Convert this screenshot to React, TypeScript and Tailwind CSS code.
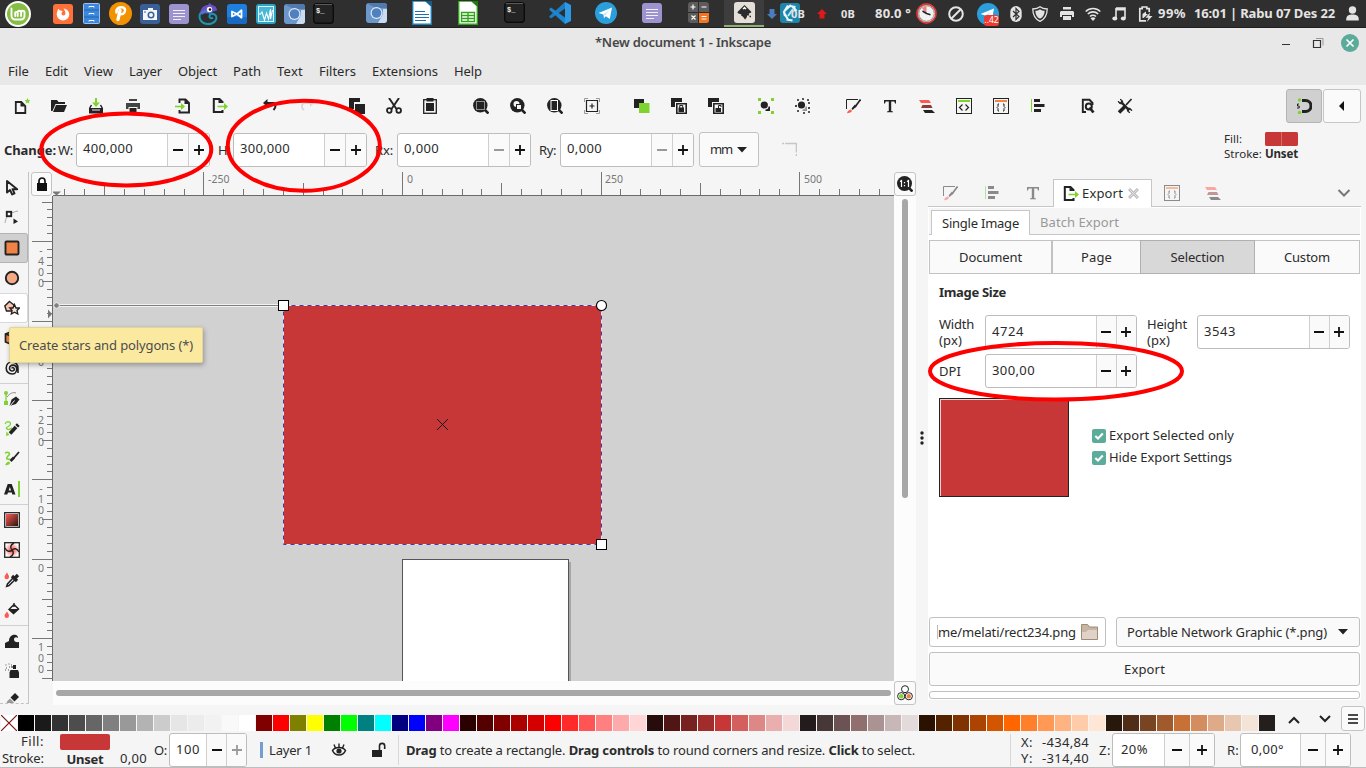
import { useLayoutEffect, useRef, useState } from "react";
import type { ReactNode } from "react";

const K = "#222222";
const G = "#7ed32f";
const R = "#ff5a52";

/* Text set to an exact advance width by tracking. */
function T({ w, c = "", children }: { w: number; c?: string; children: ReactNode }) {
  const ref = useRef<HTMLSpanElement>(null);
  const [ls, setLs] = useState(0);
  useLayoutEffect(() => {
    const el = ref.current;
    if (!el) return;
    el.style.letterSpacing = "0px";
    const n = (el.textContent || "").length || 1;
    const next = (w - el.getBoundingClientRect().width) / n;
    setLs(next);
    el.style.letterSpacing = next + "px";
  }, [w]);
  return (
    <span ref={ref} className={"inline-block shrink-0 whitespace-pre " + c} style={{ letterSpacing: ls }}>
      {children}
    </span>
  );
}

function S({ w = 16, h, vb, c = "", children }: { w?: number; h?: number; vb?: string; c?: string; children: ReactNode }) {
  const hh = h ?? w;
  return (
    <svg width={w} height={hh} viewBox={vb ?? `0 0 ${w} ${hh}`} fill="none" className={"shrink-0 " + c}>
      {children}
    </svg>
  );
}

/* ---------- desktop panel icons ---------- */
const Mint = () => (
  <S w={26} h={26}>
    <circle cx="13" cy="13" r="13" fill="#fff" />
    <circle cx="13" cy="13" r="11" fill="#86be43" />
    <path d="M6.500 7.500v7.500a3.500 3.500 0 0 0 3.500 3.500h6a3.500 3.500 0 0 0 3.500-3.500v-3.500a1.700 1.700 0 0 0-3.400 0V15M16.100 11.500a1.700 1.700 0 0 0-3.400 0V15M12.700 11.500a1.500 1.500 0 0 0-2.500 0V15" stroke="#fff" strokeWidth="1.900" strokeLinecap="round" />
  </S>
);
const Firefox = () => (
  <S w={20}>
    <rect width="20" height="20" rx="3" fill="#ff7139" />
    <path d="M10 16.500A6.300 6.300 0 0 1 3.700 10.500C3.700 8 4.700 7 5.200 4.800L7 6.500c1-.2 2 0 2.500.7L8.500 9c0 1.500.5 2.500 2 2.500S13 10 12.200 8c-.3-1.500-1-2.500-1.700-3.500 3.500.5 5.800 3 5.800 6a6.300 6.300 0 0 1-6.300 6z" fill="#fff" />
  </S>
);
const Files = () => (
  <S w={17} h={21}>
    <rect x=".5" y=".5" width="16" height="20" rx="1" fill="#3a87dd" stroke="#9cc3ee" />
    <path d="M1 7h15M1 14h15" stroke="#2564ae" />
    <path d="M6 4.500v-1h5v1M6 11.500v-1h5v1M6 18.500v-1h5v1" stroke="#fff" />
  </S>
);
const PIcon = () => (
  <S w={23}>
    <circle cx="11.500" cy="11.500" r="11.500" fill="#f39200" />
    <path d="M9 17.500 11 8.500" stroke="#fff" strokeWidth="3.400" strokeLinecap="round" />
    <path d="M7.500 10.500C7 6.500 9.500 5.300 12.500 5.300c3.500 0 4.300 2.700 3 5-1 1.700-3 2.200-5 1.900" stroke="#fff" strokeWidth="2.600" strokeLinecap="round" />
  </S>
);
const Camera = () => (
  <S w={20}>
    <rect width="20" height="20" rx="3" fill="#3a5f98" />
    <path d="M3 6h5V4h5v2h4v10H3z" fill="#f4f6fa" />
    <circle cx="11" cy="11" r="3.500" fill="#3a5f98" />
    <circle cx="11" cy="11" r="2" fill="#f4f6fa" />
    <path d="M4 8h2" stroke="#3a5f98" />
  </S>
);
const Notes = () => (
  <S w={20}>
    <rect width="20" height="20" rx="3" fill="#9d94cf" />
    <path d="M4 6.500h12M4 9.500h12M4 12.500h12M4 15.500h8" stroke="#f1effb" />
  </S>
);
const Chameleon = () => (
  <S w={20} h={22}>
    <path d="M2 10C3 4 7 2 10 2l1.500-2L14 2c3 .5 5 2.500 5 5.500-2 .5-4 .5-5 2.500l-4 .5z" fill="#6850c4" />
    <path d="M2.500 10c-2.500 5 .5 11 7.500 11 6 0 9.500-4 8-8-1.500-3-6-3-6.500 0-.3 2 2 3 3.500 1.500" stroke="#1a96b4" strokeWidth="2" />
    <path d="M3 11c2-3 7-3.500 9.500-1.500" stroke="#4d74cf" strokeWidth="3" />
    <circle cx="11.500" cy="6.500" r="2.700" fill="#fff" />
    <circle cx="12" cy="6.500" r="1.300" fill="#111" />
  </S>
);
const VsBlue = () => (
  <S w={20}>
    <rect width="20" height="20" rx="3" fill="#1d7fe0" />
    <path d="M0 13h20v4a3 3 0 0 1-3 3H3a3 3 0 0 1-3-3z" fill="#1769c4" />
    <path d="M5 7.500v5l5-2.500 4.500-3.700v7.400L10 10z" stroke="#fff" strokeWidth="1.800" strokeLinejoin="round" />
  </S>
);
const Monitor = () => (
  <S w={20}>
    <rect width="20" height="20" rx="3" fill="#2ea3c9" />
    <rect x="2.500" y="2.500" width="15" height="15" stroke="#d9f3fb" fill="#48b8d9" />
    <path d="M3 10h1.500l1.500-2 2.500 8L10.500 9l2 6L14.500 5v10l2-9" stroke="#fff" strokeWidth="1.100" />
  </S>
);
const Chromium = () => (
  <S w={21} h={20}>
    <rect width="21" height="20" rx="3" fill="#6c97cb" />
    <path d="M3 0h15a3 3 0 0 1 3 3v2H10L2 1z" fill="#5179ae" />
    <path d="M21 6v11a3 3 0 0 1-3 3h-6l5-9V6z" fill="#c9dcf1" />
    <circle cx="10.500" cy="10" r="6" fill="#dfeaf8" />
    <circle cx="10.500" cy="10" r="4.800" fill="#4f80bf" />
  </S>
);
const Term = () => (
  <S w={21}>
    <rect x=".7" y=".7" width="19.600" height="19.600" rx="3" fill="#242424" stroke="#0c0c0c" strokeWidth="1.400" />
    <path d="M2 1.500h17" stroke="#5a5a5a" />
    <text x="3" y="9.500" fontSize="7" fontFamily="Liberation Mono, monospace" fontWeight="700" fill="#eee">$_</text>
  </S>
);
const Doc = ({ calc = false }: { calc?: boolean }) => (
  <S w={20} h={24}>
    <path d="M.7 0v23.300h18.600V5L14 0z" fill="#fff" stroke={calc ? "#2fa318" : "#1c7db8"} strokeWidth="1.400" />
    <path d="M13 0h7v6z" fill={calc ? "#1f7d0f" : "#175c8a"} />
    {calc ? (
      <path d="M3.500 11.500h13v9h-13zM3.500 14.500h13M3.500 17.500h13M10 11.500v9" stroke="#2fa318" strokeWidth="1.300" />
    ) : (
      <path d="M3 10.500h10M3 13.500h14M3 16.500h14M3 19.500h11" stroke="#1c6fa8" strokeWidth="1.100" />
    )}
  </S>
);
const VsCode = () => (
  <S w={22} h={22}>
    <path d="M16 0v22l6-3V3z" fill="#2d9ae6" />
    <path d="M16 0 0 14.500l2 2L16 6.500z" fill="#1f7cc0" />
    <path d="M0 7.500l2-2 14 10V22z" fill="#1d86d1" />
  </S>
);
const Telegram = () => (
  <S w={22}>
    <circle cx="11" cy="11" r="11" fill="#2b9fdc" />
    <path d="M3.500 11 17 5.500 14.800 17l-4-2.800-1.800 2-.6-3.700z" fill="#fff" />
    <path d="M8.500 12.500 14 8.500l-4.200 5" fill="#b9dcf0" />
  </S>
);
const Calc = () => (
  <S w={21}>
    <rect width="21" height="21" rx="3" fill="#5c5c5c" />
    <path d="M11 11h10v7a3 3 0 0 1-3 3h-7z" fill="#f5751d" />
    <path d="M10.500 0v21M0 10.500h21" stroke="#2c2c2c" />
    <path d="M2.500 5h5M5 2.500v5M13.500 5h5M3.500 13.500l4 4M7.500 13.500l-4 4M13.500 14.500h5M13.500 17h5" stroke="#fff" strokeWidth="1.200" />
  </S>
);
const Ink = () => (
  <S w={21}>
    <rect width="21" height="21" rx="3" fill="#e4e0d8" />
    <path d="M10.500 3 17 9.500c1 1-.5 1.500-2 2-1 .8 1 1.300 0 2H13c0 1.500 0 2-2 4-1-1.500-2-3-4-4 1-1 0-1.500-2.500-2C3.500 11 3 10.500 4 9.500z" fill="#2b2b2b" />
    <path d="M10.500 4.500 12.500 6.700l-1 .7-1-.7-1 .8-1-.8z" fill="#fff" />
    <path d="M15.500 14.500h1.500" stroke="#2b2b2b" strokeWidth="1.500" />
  </S>
);
const Shutter = () => (
  <S w={20}>
    <rect width="20" height="20" rx="3" fill="#1f86ab" />
    <path d="M11 2 5.500 7M8 2.500 4 9l1 4M4.500 10.500l3.500 6M6.500 16.500l6 1M15.500 4 10 3M12 3l4.500 5" stroke="#e8f6fc" strokeWidth="2.200" />
    <path d="M13 6 8 13" stroke="#bfe4f2" strokeWidth="2" />
  </S>
);
const Arrow = ({ up = false }: { up?: boolean }) => (
  <S w={10}>
    {up ? <path d="M5 0 10 5H7.500v4.500h-5V5H0z" fill="#e01818" /> : <path d="M5 10 0 5h2.500V0h5v5H10z" fill="#4a7dbd" />}
  </S>
);
const Clock = () => (
  <S w={21}>
    <circle cx="10.500" cy="10.500" r="9.500" fill="#f2f2f2" stroke="#d83a3a" strokeWidth="1.800" />
    <circle cx="10.500" cy="10.500" r="7.800" stroke="#888" strokeWidth="1" />
    <path d="M10.500 10.500V3L6 5z" fill="#f08080" />
    <path d="M10.500 10.500 6.500 8M10.500 10.500l4 1.200" stroke="#222" strokeWidth="1.500" />
  </S>
);
const W = "#e4e4e4";
const NoEntry = () => (
  <S>
    <circle cx="8" cy="8" r="6.800" stroke={W} strokeWidth="2" />
    <path d="M12.500 3.500l-9 9" stroke={W} strokeWidth="2" />
  </S>
);
const Blue = () => (
  <S w={12} h={16}>
    <rect x=".3" width="11.400" height="16" rx="5.700" fill={W} />
    <path d="M3 5l6 5.500L6 13.500v-11L9 5.500 3 11" stroke="#2f2f2f" strokeWidth="1.200" />
  </S>
);
const Shield = () => (
  <S>
    <path d="M8 .8C6 2.500 3.500 3 .8 3 .8 9 3 13 8 15.300 13 13 15.200 9 15.200 3 12.500 3 10 2.500 8 .8z" stroke={W} strokeWidth="1.300" />
    <path d="M8 3.200C6.500 4.300 5 4.700 3.300 4.800c.2 4 1.700 6.500 4.700 8 3-1.500 4.500-4 4.700-8C11 4.700 9.500 4.300 8 3.200z" fill={W} />
  </S>
);
const Print = ({ f = W, o = 1 }: { f?: string; o?: number }) => (
  <S w={14} h={13}>
    <path d="M3 0h8v2.500H3z" fill={f} />
    <path d="M1 4h12l1 1v5h-2V8H2v2H0V5z" fill={f} fillOpacity={o} />
    <path d="M3 9h8v4H3z" fill={f} />
  </S>
);
const Wifi = () => (
  <S w={16} h={14}>
    <path d="M.7 4.500a10.500 10.500 0 0 1 14.600 0M2.800 7a7.500 7.500 0 0 1 10.400 0M5 9.500a4.300 4.300 0 0 1 6 0" stroke={W} strokeWidth="1.600" />
    <path d="M5.500 11.200 8 14l2.500-2.800a4 4 0 0 0-5 0z" fill={W} />
  </S>
);
const Music = () => (
  <S w={14}>
    <path d="M4 1h9v10M4 1v10" stroke={W} strokeWidth="1.600" />
    <path d="M4 1h9v2.500H4z" fill={W} />
    <ellipse cx="2.800" cy="11.500" rx="2.500" ry="2" fill={W} />
    <ellipse cx="11.300" cy="11.500" rx="2.500" ry="2" fill={W} />
  </S>
);
const Batt = () => (
  <S w={15} h={16}>
    <path d="M8 14.800H1.800V2.700h2.400V1h4.600v1.700h2.400V6" stroke={W} strokeWidth="1.700" />
    <path d="M4.500 12V8L8 5.500V8h2L5.500 12z" fill={W} />
    <path d="M12 6.500 7.500 11.800h3L8.800 16l5.700-6h-3.200z" fill={W} />
  </S>
);
const User = () => (
  <S w={13} h={15}>
    <circle cx="6.500" cy="4" r="3.700" fill={W} />
    <path d="M.3 14.500c-.5-5 2.500-6 6.200-6s6.700 1 6.200 6z" fill={W} />
  </S>
);

/* ---------- Inkscape command icons (16px grid) ---------- */
const DocOut = () => (
  <S>
    <path d="M10.500 5V4L7.500 1H1.800v13H10.500v-2" stroke={K} strokeWidth="2" />
    <path d="M6.500 1v4h4z" fill={K} />
    <path d="M5.500 8.500h7" stroke={G} strokeWidth="1.500" />
    <path d="M12 5l4 3.500-4 3.500z" fill={G} />
  </S>
);
const Brush = () => (
  <S>
    <path d="M1.500 11V1.500H13" stroke={K} />
    <path d="M15.500 1.500 10 9" stroke={K} strokeWidth="1.700" />
    <path d="M10 6.500 11.500 8.500 7.500 12l-1-1.500z" fill={K} />
    <path d="M6 11.500 7 13c-1.500 2-3 2-5 2.300.5-2.200 2-3.500 4-3.800z" fill={R} />
  </S>
);
const TextT = () => (
  <S>
    <path d="M2 2h12v3.500h-1L12.300 3.500H9.200v9.500l1.800.6v.6H5v-.6l1.800-.6V3.500H3.700L3 5.500H2z" fill={K} />
  </S>
);
const Layers = () => (
  <S>
    <path d="M0 2h10l2 3H2z" fill={R} />
    <path d="M3.500 7H12l1.500 3H2z" fill="#8e3a38" />
    <path d="M4 12h9l3 3H6z" fill={K} />
  </S>
);
const Sheet = ({ col, txt }: { col: string; txt: string }) => (
  <S>
    <rect x=".5" y=".5" width="15" height="15" stroke={K} />
    <path d="M2 3h12" stroke={col} strokeWidth="2" />
    {txt === "<>" ? (
      <path d="M6.500 6.500 3.500 9.500l3 3M9.500 6.500l3 3-3 3" stroke={K} strokeWidth="1.200" />
    ) : (
      <path d="M6 6H5v2.500L4 9.500l1 1V13h1M10 6h1v2.500l1 1-1 1V13h-1" stroke={K} />
    )}
  </S>
);
const Align = () => (
  <S>
    <path d="M1.500 1v13" stroke={G} />
    <path d="M4 2.500h6M4 7.500h10.500M4 12.500h7" stroke={K} strokeWidth="3" />
  </S>
);
const Mag = ({ children }: { children: ReactNode }) => (
  <S>
    <circle cx="7.300" cy="7.300" r="7.200" fill={K} />
    <path d="M12 12l3.500 3.500" stroke={K} strokeWidth="2.600" />
    {children}
  </S>
);
const cmd: ReactNode[][] = [
  [
    <S>
      <path d="M1.800 4h5.500l4 4v7H1.800z" stroke={K} strokeWidth="1.800" />
      <path d="M6.500 4v4.500H11z" fill={K} />
      <path d="M13.500 0l.9 1.900 2 .2-1.500 1.400.4 2-1.800-1-1.800 1 .4-2-1.500-1.400 2-.2z" fill={G} />
    </S>,
    <S>
      <path d="M0 2h6l1.500 2H14v2H4.500L1.500 13H0z" fill={K} />
      <path d="M5 7h11l-3 7H2z" fill={K} />
    </S>,
    <S>
      <path d="M7 0h2v4.500h3L8 9 4 4.500h3z" fill={G} />
      <path d="M3.500 7 1.500 10.500M12.500 7l2 3.500" stroke={K} strokeWidth="1.500" />
      <path d="M1 10h14v5.500H1z" fill={K} />
      <path d="M4 12h8" stroke="#eee" />
    </S>,
    <S>
      <path d="M4 1h8v2H4zM1 5h14v6h-2.500V9h-9v2H1z" fill="#444" />
      <path d="M4.500 10h7v4h-7z" fill={K} />
    </S>,
  ],
  [
    <S>
      <path d="M4.500 5V1.500h6L14 5v9.500H4.500V12" stroke={K} strokeWidth="1.900" />
      <path d="M9.500 1v5H14z" fill={K} />
      <path d="M0 8.500h7" stroke={G} strokeWidth="1.600" />
      <path d="M6 5l4 3.500L6 12z" fill={G} />
    </S>,
    <DocOut />,
  ],
  [
    <S>
      <path d="M3 5h8c3 0 3.500 4 .5 7" stroke={K} strokeWidth="2" />
      <path d="M5.500 1v8L1 5z" fill={K} />
    </S>,
    <S>
      <path d="M13 5H6C2 5 2 10 5 12" stroke="#d8d8d8" strokeWidth="1.800" />
      <path d="M11 1v8l4-4z" fill="#d8d8d8" />
    </S>,
  ],
  [
    <S>
      <path d="M0 0h11v4H5v7H0z" fill={K} />
      <path d="M6 6h10v10H6z" fill={K} />
    </S>,
    <S>
      <path d="M3 0 10.500 11M13 0 5.500 11" stroke={K} strokeWidth="1.900" />
      <circle cx="3.300" cy="12.500" r="2.300" stroke={K} strokeWidth="1.800" />
      <circle cx="12.700" cy="12.500" r="2.300" stroke={K} strokeWidth="1.800" />
    </S>,
    <S c="-ml-px">
      <rect x="1.700" y="1.700" width="12.600" height="13.600" stroke={K} strokeWidth="1.300" />
      <path d="M4.500 0h7v3.500h-7zM4 5h8v8H4z" fill={K} />
    </S>,
  ],
  [
    <Mag>
      <rect x="3.500" y="3.500" width="8" height="8" stroke="#fff" strokeDasharray="1 1" />
    </Mag>,
    <Mag>
      <circle cx="6.500" cy="6" r="3" fill="#f5f5f5" />
      <rect x="6.500" y="6.500" width="5" height="5" fill="#f5f5f5" stroke={K} />
    </Mag>,
    <Mag>
      <rect x="4" y="2.500" width="6.500" height="10" stroke="#fff" fill={K} />
    </Mag>,
    <S>
      <path d="M.5 4V.5H4M12 .5h3.500V4M15.500 12v3.500H12M4 15.500H.5V12" stroke="#999" />
      <path d="M2.500 2.500h11v11h-11zM8 5.500v5M5.500 8h5" stroke={K} strokeWidth="1.200" />
    </S>,
  ],
  [
    <S>
      <path d="M0 1h10v4H5v5H0z" fill={K} />
      <path d="M5 5h10.500v10H5z" fill={G} />
    </S>,
    <S>
      <path d="M0 0h11v4H4v5H0z" fill={K} />
      <path d="M5.800 5.800h9.400v9.400H5.800z" stroke={K} strokeWidth="1.600" />
      <path d="M7.500 9.500h5.500V14H7.500z" fill={K} />
      <path d="M8.700 10V7.500h3V10" stroke={K} />
    </S>,
    <S>
      <path d="M0 0h11v4H4v5H0z" fill={K} />
      <path d="M5.800 5.800h9.400v9.400H5.800z" stroke={K} strokeWidth="1.600" />
      <path d="M7.500 10h5.500v4H7.500z" fill={K} />
      <path d="M10.500 10V7.500h2.500V9" stroke={K} />
    </S>,
  ],
  [
    <S>
      <path d="M0 0h3v3H0zM13 0h3v3h-3zM0 13h3v3H0zM13 13h3v3h-3z" fill={G} />
      <circle cx="6.300" cy="7" r="3.600" fill={K} />
      <path d="M10.500 8.500H12V13H7.500v-1.500c2 0 3-1 3-3z" fill={K} />
    </S>,
    <S>
      <circle cx="6.500" cy="7" r="3.600" fill={K} />
      <path d="M10.500 8.500H12V13H7.500v-1.500c2 0 3-1 3-3z" fill="#999" />
      <path d="M2 2h2M7 1h2M12 2h2M1 7v2M13 5h2M2 13h2M8 15h2M13 14h2M14 9v2" stroke={K} strokeWidth="1.700" />
    </S>,
  ],
  [<Brush />, <TextT />, <Layers />, <Sheet col={G} txt="<>" />, <Sheet col="#f58442" txt="{}" />, <Align />],
  [
    <S>
      <path d="M6 14H2.800V1.800H9.500L12.500 5v2" stroke={K} strokeWidth="1.900" />
      <circle cx="8.800" cy="8.500" r="3" stroke={K} strokeWidth="2" />
      <path d="M9.500 9.500 13.500 14.500" stroke={K} strokeWidth="2.800" />
    </S>,
    <S>
      <path d="M14.500 1 9 7" stroke={K} strokeWidth="1.700" />
      <path d="M8.500 8 2 14.500" stroke={K} strokeWidth="3.600" />
      <path d="M5 5l6.500 6.500" stroke={K} strokeWidth="2.400" />
      <path d="M3 1.300 4.800 3 3.200 4.800 1.200 3.300A3 3 0 0 0 5.500 5.500 3 3 0 0 0 3 1.300zM13 14.700 11.200 13l1.600-1.800 2 1.500a3 3 0 0 0-4.300-2.200 3 3 0 0 0 2.500 4.200z" fill={K} stroke={K} />
    </S>,
  ],
];

/* ---------- toolbox icons ---------- */
const tools: ReactNode[][] = [
  [
    <S>
      <path d="M3 1v11.500L6 10l2.200 4.500 2.300-1L8.500 9.200h4.700z" stroke={K} strokeWidth="1.900" strokeLinejoin="round" />
    </S>,
    <S>
      <path d="M1 13C1.500 8 4 3 14 1" stroke="#aaa" />
      <rect x="2.800" y="1.800" width="4.400" height="4.400" fill="#fff" stroke={K} strokeWidth="1.900" />
      <path d="M9.500 8.500 14 11.500l-4.500 2.500z" fill={K} />
    </S>,
    <S>
      <rect x="1.500" y="1.500" width="13" height="13" rx="1" fill="#f08247" stroke={K} strokeWidth="1.900" />
    </S>,
    <S>
      <circle cx="8" cy="8" r="6.200" fill="#f5a985" stroke={K} strokeWidth="1.900" />
    </S>,
    <S>
      <path d="M5.500 1.500 10 5 8.500 11H2.500L.8 6z" fill="#fac5ab" stroke={K} strokeWidth="1.400" />
      <path d="M10.500 4.500 12 8h3.500l-2.500 2.500.8 3.500-3.300-1.800L7.300 14l.8-3.500L5.800 8H9z" fill="#fde2d5" stroke={K} strokeWidth="1.300" />
    </S>,
    <S>
      <path d="M1.500 4 8 1.500 14.500 4v8L8 14.500 1.500 12z" fill="#f08247" stroke={K} strokeWidth="1.700" />
      <path d="M1.500 4 8 6.500 14.500 4M8 6.500v8" stroke={K} strokeWidth="1.400" />
    </S>,
    <S>
      <path d="M8 8.500c0-1.500 2.500-1 2.300.8-.3 2.500-4.800 2.200-4.800-1C5.500 4 12.500 4 12.700 9c0 3-2 5-4.500 5C0 14 .500 2 8 2c4 0 6 3 6 7v4" stroke={K} strokeWidth="1.600" />
    </S>,
  ],
  [
    <S>
      <path d="M2 2v11" stroke={G} strokeWidth="1.300" />
      <circle cx="2" cy="2" r="2" fill={G} />
      <path d="M0 10h4v4H0z" fill={G} />
      <path d="M3 6C6 2 9 1 12 2" stroke="#888" />
      <path d="M5.500 15 7.500 8.500 12 5.500 15.500 8.500 12 13z" fill={K} />
      <path d="M6 15l4.500-5.500" stroke="#eee" />
    </S>,
    <S>
      <path d="M1 3C3-1 8 1 6 4S1 6 3 8s4-1 5-1" stroke={G} strokeWidth="1.300" />
      <path d="M2.500 10.500 5.500 14 2 15z" fill={G} />
      <path d="M6 12.500 12 6" stroke={K} strokeWidth="3.600" />
      <path d="M12.700 5.300l1.600-1.700" stroke={K} strokeWidth="3.800" />
    </S>,
    <S>
      <path d="M1 2c4-2 6 1 3 3-2 2-2 4 2 3" stroke={G} strokeWidth="1.600" />
      <path d="M15 1 9 8" stroke={K} strokeWidth="1.800" />
      <path d="M10 6.500 6.500 10" stroke={K} strokeWidth="2.600" />
      <path d="M5 10.500 6.200 12c-1 2-3 2.200-5 2.300.5-2 1.800-3.600 3.800-3.800z" fill={G} />
    </S>,
    <S>
      <path d="M3.700 3h4L11.500 13.500H8.300L7.800 11.500H4L3.300 13.500H0zM5.800 6 4.700 9.500h2.400z" fill={K} fillRule="evenodd" />
      <path d="M15 0v16" stroke={G} strokeWidth="2" />
    </S>,
  ],
  [
    <S>
      <defs>
        <linearGradient id="gr" x1="0" y1="0" x2="1" y2="1">
          <stop stopColor="#ff5a52" />
          <stop offset="1" stopColor="#2a1412" />
        </linearGradient>
      </defs>
      <rect x=".700" y=".700" width="14.600" height="14.600" fill="#fff" stroke={K} strokeWidth="1.300" />
      <rect x="2" y="2" width="12" height="12" fill="url(#gr)" />
    </S>,
    <S>
      <defs>
        <radialGradient id="gm">
          <stop stopColor="#ff3a32" />
          <stop offset="1" stopColor="#fff" />
        </radialGradient>
      </defs>
      <rect x=".700" y=".700" width="14.600" height="14.600" fill="url(#gm)" stroke={K} strokeWidth="1.300" />
      <path d="M10 1C6 3 6 6 8 8s2 5-2 7M1 6c2 4 5 4 7 2s5-2 7 2" stroke={K} strokeWidth="1.400" />
    </S>,
    <S>
      <path d="M3 .5C4.500 3 5 3.500 5 5a2.200 2.200 0 0 1-4.500 0C.5 3.500 1.500 3 3 .500z" fill={R} />
      <path d="M9.500 5.500 3.500 12l-.8 2.300L5 13.500l6.200-6" stroke={K} strokeWidth="1.500" />
      <path d="M8 4l5 5M10.500 6.500 14 3" stroke={K} strokeWidth="3.200" />
    </S>,
    <S>
      <path d="M3 9.500C4.500 12 5 12.500 5 13.700a2.200 2.200 0 0 1-4.500 0C.5 12.500 1.500 12 3 9.500z" fill={R} />
      <path d="M10 2.500 14.500 7 9.500 11.500 5 7.500zM10 5V1" stroke={K} strokeWidth="1.400" />
      <path d="M5 7h10l-5.500 5z" fill={K} />
    </S>,
  ],
  [
    <S>
      <path d="M1 15V10l4-2c0-4 3-7 7-6 1.500.5 2 1.500 2 3-1.500-1.500-4-1-4 1.500 0 2 2 3 5 2.500v6z" fill={K} />
    </S>,
    <S>
      <path d="M1.500 2h1M4.500 1h1M2 5h1M5 4h1M1 7h1M7 2h1M4 7h1" stroke="#888" strokeWidth="1.500" />
      <path d="M5.500 9.500 6.500 7h7.500l1 2.500V15H5.500z" fill={K} />
      <path d="M9 2h3v4H9z" fill={K} />
      <path d="M7 4h3" stroke={K} />
    </S>,
    <S>
      <path d="M11 0l4 4-4.500 4.500-4-4z" fill={K} />
      <path d="M6 5.500l4 4-3.500 3c-2 1-4.500-1.500-3.500-4z" fill="#999" />
    </S>,
  ],
];

/* ---------- widgets ---------- */
const Minus = ({ dim = false }: { dim?: boolean }) => (
  <S w={10}>
    <path d="M0 5h10" stroke={dim ? "#999" : "#111"} strokeWidth="1.800" />
  </S>
);
const Plus = ({ dim = false }: { dim?: boolean }) => (
  <S w={10}>
    <path d="M0 5h10M5 0v10" stroke={dim ? "#999" : "#111"} strokeWidth="1.800" />
  </S>
);
function Spin({ c, b, v, w, dm = false, dp = false, p = "pl-[6px]" }: { c: string; b: string; v: string; w: number; dm?: boolean; dp?: boolean; p?: string }) {
  return (
    <div className={"flex h-[34px] shrink-0 overflow-hidden rounded-[3px] border border-[#bdbdbd] bg-white " + c}>
      <div className={"flex min-w-0 flex-1 items-center pb-[2px] " + p}>
        <T w={w}>{v}</T>
      </div>
      <div className={"flex shrink-0 items-center justify-center border-l border-[#cfcfcf] bg-[#fafafa] " + b}>
        <Minus dim={dm} />
      </div>
      <div className={"flex shrink-0 items-center justify-center border-l border-[#cfcfcf] bg-[#fafafa] " + b}>
        <Plus dim={dp} />
      </div>
    </div>
  );
}

const menus: [string, number][] = [
  ["File", 21], ["Edit", 23], ["View", 29], ["Layer", 33], ["Object", 39],
  ["Path", 28], ["Text", 26], ["Filters", 37], ["Extensions", 66], ["Help", 28],
];

const palette =
  "000 1a1a1a 333 4d4d4d 666 808080 999 b3b3b3 ccc e6e6e6 ececec f2f2f2 f9f9f9 fff 800000 f00 808000 ff0 008000 0f0 008080 0ff 000080 00f 800080 f0f 2b0000 550000 800000 a00 d40000 f00 ff2a2a f55 ff8080 faa ffd5d5 280b0b 501616 782121 a02c2c c83737 d35f5f de8787 e9afaf f4d7d7 241c1c 483737 6c5353 916f6f ac9393 c8b7b7 e3dbdb 2b1100 520 803300 a40 d45500 f60 ff7f2a f95 ffb380 fca ffe6d5 28170b 502d16 784421 a05a2c c87137 d38d5f deaa87 e9c6af f4e3d7 241f1c".split(" ");

function HRuler() {
  const ticks = [];
  for (let i = -17; i <= 24; i++) {
    const x = Math.round(349.5 + i * 19.86 - 0.5) + 0.5;
    if (x < 1 || x > 840) continue;
    const len = i % 10 === 0 ? 24 : i % 5 === 0 ? 13 : 7;
    ticks.push(<path key={i} d={`M${x} ${24 - len}v${len}`} stroke="#777" />);
  }
  return (
    <S w={841} h={24}>
      {ticks}
      <path d="M0 23.500h841" stroke="#6a6a6a" />
      <path d="M-1 19.500h9l-4.500 4z" fill="#777" />
      {[["-250", 155], ["0", 354], ["250", 552], ["500", 751]].map(([t, x]) => (
        <text key={t} x={x} y="11" fontSize="10.500" fill="#777" fontFamily="Noto Sans, sans-serif">{t}</text>
      ))}
    </S>
  );
}
function VRuler() {
  const out: ReactNode[] = [];
  for (let i = -45; i <= 15; i++) {
    const y = Math.floor(363.3 + i * 7.94) + 0.5;
    if (y < 1 || y > 484.6) continue;
    const len = i % 10 === 0 ? 21 : i % 5 === 0 ? 11 : 6;
    out.push(<path key={i} d={`M${24 - len} ${y}h${len}`} stroke="#777" />);
  }
  [["-400", 45], ["-300", 124], ["-200", 204], ["-100", 283], ["0", 363], ["100", 442]].forEach(([t, y]) =>
    String(t).split("").forEach((ch, j) =>
      out.push(
        <text key={t + "-" + j} x="12" y={Number(y) + 13 + j * 11} fontSize="10.500" textAnchor="middle" fill="#777" fontFamily="Noto Sans, sans-serif">{ch}</text>
      )
    )
  );
  return (
    <S w={24} h={485}>
      {out}
      <path d="M23.500 0v485" stroke="#6a6a6a" />
      <path d="M19 113.500v9l4-4.500z" fill="#777" />
    </S>
  );
}
function Canvas() {
  return (
    <S w={841} h={485} c="bg-[#d1d1d1]">
      <rect x="352" y="366" width="166" height="130" fill="#888" opacity=".6" />
      <rect x="349.500" y="363.500" width="166" height="130" fill="#fff" stroke="#555" />
      <rect x="231" y="110" width="318" height="239" fill="#c83737" />
      <path d="M3 109.500h228" stroke="#f2f2f2" strokeWidth="3" />
      <path d="M3 109.500h228" stroke="#808080" />
      <circle cx="3.500" cy="109.500" r="2.800" fill="#808080" stroke="#eee" />
      <rect x="230.500" y="109.500" width="318" height="239" stroke="#f5e0e0" />
      <rect x="230.500" y="109.500" width="318" height="239" stroke="#4038b8" strokeDasharray="4 4" />
      <path d="M384 223l11 11M395 223l-11 11" stroke="#111" />
      <rect x="225.500" y="104.500" width="10" height="10" fill="#fff" stroke="#000" />
      <rect x="543.500" y="343.500" width="10" height="10" fill="#fff" stroke="#000" />
      <circle cx="548.500" cy="109.500" r="5" fill="#fff" stroke="#000" strokeWidth="1.100" />
    </S>
  );
}

const Check = ({ t, w }: { t: string; w: number }) => (
  <div className="flex h-[22px] items-center">
    <S w={14}>
      <rect width="14" height="14" rx="2" fill="#5cab9b" />
      <path d="M3.300 7 6 9.500 10.800 4.500" stroke="#fff" strokeWidth="2.100" />
    </S>
    <T w={w} c="ml-[3px]">{t}</T>
  </div>
);

export default function App() {
  return (
    <div className="relative flex h-[768px] w-[1366px] flex-col overflow-hidden bg-[#f5f5f5] font-['Noto_Sans',sans-serif] text-[13px] leading-none text-[#2b2b2b]">
      {/* desktop panel */}
      <div className="flex h-[28px] shrink-0 items-center border-b border-[#1f1f1f] bg-[#2f2f2f] font-bold text-[#e4e4e4]">
        <div className="flex w-[35px] justify-center"><Mint /></div>
        <div className="ml-[13px] flex">
          {[<Firefox />, <Files />, <PIcon />, <Camera />, <Notes />, <Chameleon />, <VsBlue />, <Monitor />, <Chromium />, <Term />].map((n, i) => (
            <div key={i} className="flex h-[27px] w-[29px] items-center justify-center">{n}</div>
          ))}
        </div>
        <div className="ml-[15px] flex">
          {[<Chromium />, <Doc />, <Doc calc />, <Term />, <VsCode />, <Telegram />, <Notes />, <Calc />].map((n, i) => (
            <div key={i} className="flex h-[25px] w-[46px] items-center justify-center">{n}</div>
          ))}
          <div className="mx-[3px] flex h-[27px] w-[40px] items-center justify-center border-b-2 border-[#8fb070] bg-[#3d3d3d]"><Ink /></div>
        </div>
        <Arrow />
        <div className="relative ml-[3px] h-[22px] w-[20px] text-[11px]">
          <Shutter />
          <div className="absolute left-[11px] top-[5px]"><T w={14}>0B</T></div>
        </div>
        <div className="ml-[17px]"><Arrow up /></div>
        <T w={14} c="ml-[14px] text-[11px]">0B</T>
        <T w={36} c="ml-[20px]">80.0 °</T>
        <div className="ml-[5px]"><Clock /></div>
        <div className="ml-[11px]"><NoEntry /></div>
        <div className="relative ml-[13px]">
          <Telegram />
          <div className="absolute left-[7px] top-[12px] h-[11px] w-[15px] rounded-[3px] bg-[#ee3b32] pt-[1px] text-center text-[8.500px] font-normal text-white">..42</div>
        </div>
        <div className="ml-[11px]"><Blue /></div>
        <div className="ml-[10px]"><Shield /></div>
        <div className="ml-[12px]"><Print /></div>
        <div className="ml-[11px]"><Wifi /></div>
        <div className="ml-[11px]"><Music /></div>
        <div className="ml-[12px]"><Batt /></div>
        <T w={28} c="ml-[5px]">99%</T>
        <T w={141} c="ml-[8px]">16:01 | Rabu 07 Des 22</T>
        <div className="ml-[11px]"><User /></div>
      </div>

      {/* title */}
      <div className="flex h-[29px] shrink-0 items-center bg-[#e8e8e8]">
        <T w={176} c="ml-[595px] font-semibold text-[#474747]">*New document 1 - Inkscape</T>
        <S w={10} c="ml-[510px]"><path d="M1 6.500h8" stroke="#333" /></S>
        <S w={12} c="ml-[21px]">
          <path d="M4 1.500h7v7" stroke="#999" />
          <path d="M1.500 3.500h7v7h-7z" stroke="#333" strokeWidth="1.200" />
        </S>
        <S w={18} c="ml-[17px]">
          <circle cx="9" cy="9" r="9" fill="#5aab9a" />
          <path d="M5.500 5.500l7 7M12.500 5.500l-7 7" stroke="#fff" strokeWidth="1.700" />
        </S>
      </div>
      <div className="flex h-[28px] shrink-0 items-center gap-[16px] bg-[#e8e8e8] pl-[8px]">
        {menus.map(([m, w]) => <T key={m} w={w}>{m}</T>)}
      </div>

      {/* command bar */}
      <div className="flex h-[42px] shrink-0 items-center pl-[3px]">
        <div className="flex gap-[13px]">
          {cmd.map((g, i) => (
            <div key={i} className="flex">
              {g.map((n, j) => <div key={j} className="flex w-[37px] justify-center">{n}</div>)}
            </div>
          ))}
        </div>
        <div className="ml-auto flex h-[34px] w-[36px] items-center justify-center rounded-[3px] border border-[#b4b4b4] bg-[#d0d0d0]">
          <S>
            <path d="M6 2.500h3.500a5.300 5.300 0 0 1 0 11H6" stroke={K} strokeWidth="3" />
            <circle cx="3.500" cy="2" r="1.700" fill={G} />
            <circle cx="3.500" cy="14.500" r="1.700" fill={G} />
            <path d="M3 6H1.500v2h1.700v2H1" stroke={K} />
          </S>
        </div>
        <div className="ml-px mr-[5px] flex h-[34px] w-[38px] items-center justify-center rounded-[3px] border border-[#c6c6c6] bg-[#fafafa]">
          <S w={6} h={10}><path d="M5 0v10L0 5z" fill="#111" /></S>
        </div>
      </div>

      {/* tool controls */}
      <div className="flex h-[45px] shrink-0 items-center pl-[4px]">
        <T w={52} c="mt-[2px] font-bold">Change:</T>
        <T w={15} c="ml-[2px] mt-[2px]">W:</T>
        <Spin c="ml-[3px] w-[134px]" b="w-[21px]" v="400,000" w={50} />
        <T w={13} c="ml-[8px] mt-[2px]">H:</T>
        <Spin c="ml-[2px] w-[134px]" b="w-[21px]" v="300,000" w={50} />
        <T w={18} c="ml-[8px] mt-[2px]">Rx:</T>
        <Spin c="ml-[4px] w-[134px]" b="w-[21px]" v="0,000" w={35} dm />
        <T w={17} c="ml-[8px] mt-[2px]">Ry:</T>
        <Spin c="ml-[4px] w-[134px]" b="w-[21px]" v="0,000" w={35} dm />
        <div className="ml-[5px] flex h-[35px] w-[60px] items-center rounded-[3px] border border-[#c2c2c2] bg-[#fafafa] pl-[10px]">
          <T w={22}>mm</T>
          <S w={10} h={6} c="ml-[5px]"><path d="M0 0h10L5 5.500z" fill="#222" /></S>
        </div>
        <S c="ml-[22px]">
          <path d="M4 1.500h11.500v9" stroke="#c6c6c6" strokeWidth="1.600" />
          <path d="M1 1.500h2M15.500 12v2" stroke="#c6c6c6" strokeWidth="1.600" />
        </S>
        <div className="-mt-[6px] ml-auto mr-[68px] flex w-[74px] flex-col gap-[1px] text-[11.500px]">
          <div className="flex h-[14px] items-center justify-between">
            <T w={18}>Fill:</T>
            <div className="flex h-[14px] w-[33px] gap-px rounded-[2px] bg-[#d86a6a]">
              <div className="flex-1 rounded-l-[2px] bg-[#c83737]" />
              <div className="flex-1 rounded-r-[2px] bg-[#c83737]" />
            </div>
          </div>
          <div className="flex h-[15px] items-center justify-between">
            <T w={38}>Stroke:</T>
            <T w={33} c="font-bold">Unset</T>
          </div>
        </div>
      </div>

      {/* main */}
      <div className="flex h-[534px] shrink-0">
        {/* toolbox */}
        <div className="flex w-[29px] shrink-0 flex-col">
          <div className="flex h-[532px] flex-col overflow-hidden border-b border-r border-dashed border-b-[#c4c4c4] border-r-[#c4c4c4] pt-[1px] [border-right-style:solid]">
            {tools.map((g, i) => (
              <div key={i} className={"shrink-0 " + (i ? "border-t border-[#d0d0d0]" : "")}>
                {g.map((n, j) => (
                  <div
                    key={j}
                    className={
                      "flex h-[30px] w-[28px] items-center rounded-r-[3px] pl-[4px] " +
                      (i === 0 && j === 2 ? "border-y border-r border-[#b4b4b4] bg-[#d0d0d0]" : i === 0 && j === 4 ? "border-y border-r border-[#d8d8d8] bg-white" : "")
                    }
                  >
                    {n}
                  </div>
                ))}
              </div>
            ))}
          </div>
        </div>

        {/* rulers */}
        <div className="flex w-[24px] shrink-0 flex-col">
          <div className="ml-[2px] flex h-[24px] w-[21px] items-center justify-center rounded-[3px] border border-[#c4c4c4] bg-[#fafafa]">
            <S w={12} h={14}>
              <path d="M1 6h10v8H1z" fill="#111" />
              <path d="M3 6.500V4a3 3 0 0 1 6 0v2.500" stroke="#111" strokeWidth="1.700" />
            </S>
          </div>
          <VRuler />
        </div>

        <div className="flex w-[841px] shrink-0 flex-col">
          <HRuler />
          <Canvas />
          <div className="flex h-[24px] items-center bg-[#fcfcfc] px-[3px]">
            <div className="h-[6px] w-full rounded-full bg-[#a7a7a7]" />
          </div>
        </div>

        <div className="flex w-[22px] shrink-0 flex-col">
          <div className="flex h-[24px] w-[22px] items-center justify-center rounded-[3px] border border-[#c4c4c4] bg-[#fafafa]">
            <S>
              <circle cx="7.500" cy="7.500" r="7.500" fill={K} />
              <path d="M12 12l3.500 3.500" stroke={K} strokeWidth="2.600" />
              <path d="M3 5.500 4.500 4.500V11M10 5.500l1.500-1V11M7.500 6v1.300M7.500 9v1.300" stroke="#fff" strokeWidth="1.200" />
            </S>
          </div>
          <div className="flex flex-1 justify-center bg-[#fcfcfc] pt-[3px]">
            <div className="h-[299px] w-[6px] rounded-full bg-[#a7a7a7]" />
          </div>
          <div className="mb-px flex h-[24px] w-[22px] items-center justify-center rounded-[3px] border border-[#c4c4c4] bg-[#fafafa]">
            <S>
              <circle cx="8" cy="4.200" r="3.500" fill="#fff" stroke={K} />
              <circle cx="4.200" cy="11.200" r="3.600" fill="#fff" stroke={K} />
              <circle cx="11.800" cy="11.200" r="3.600" fill="#fff" stroke={K} />
              <circle cx="4.200" cy="11.200" r="2.200" fill={G} />
              <circle cx="11.800" cy="11.200" r="2.200" fill="#f08247" />
            </S>
          </div>
        </div>

        <div className="flex w-[12px] shrink-0 items-center justify-center pb-[2px]">
          <S w={4} h={14}>
            <circle cx="2" cy="2" r="1.700" fill={K} />
            <circle cx="2" cy="7" r="1.700" fill={K} />
            <circle cx="2" cy="12" r="1.700" fill={K} />
          </S>
        </div>

        {/* dock */}
        <div className="flex h-[528px] w-[433px] shrink-0 flex-col pt-[7px]">
          <div className="flex h-[28px] shrink-0 items-stretch">
            <div className="flex w-[125px] items-center border-b border-[#c6c6c6] pl-[14px]">
              <div className="opacity-50"><Brush /></div>
              <div className="ml-[26px] opacity-50"><Align /></div>
              <div className="ml-[25px] opacity-50"><TextT /></div>
            </div>
            <div className="flex w-[99px] items-center border-x border-t border-[#c6c6c6] bg-white pl-[9px]">
              <DocOut />
              <T w={41} c="ml-[3px]">Export</T>
              <S w={11} c="ml-[5px]"><path d="M1 1l9 9M10 1l-9 9" stroke="#bdbdbd" strokeWidth="3" /><path d="M1.500 1.500l8 8M9.500 1.500l-8 8" stroke="#e4e4e4" /></S>
            </div>
            <div className="flex flex-1 items-center border-b border-[#c6c6c6] pl-[12px]">
              <div className="opacity-50"><Sheet col="#f58442" txt="{}" /></div>
              <div className="ml-[25px] opacity-50"><Layers /></div>
              <S w={14} h={8} c="ml-auto mr-[10px]"><path d="M1.500 1 7 6.500 12.500 1" stroke="#777" strokeWidth="2" /></S>
            </div>
          </div>
          <div className="flex flex-1 flex-col bg-white px-[1px] pt-[1px]">
            <div className="flex h-[27px] shrink-0 items-end bg-[#f5f5f5]">
              <div className="h-full w-[2px] border-b border-[#c6c6c6]" />
              <div className="flex h-[25px] w-[99px] items-center justify-center border-x border-t border-[#c6c6c6] bg-white"><T w={77}>Single Image</T></div>
              <div className="flex h-[25px] flex-1 items-center border-b border-[#c6c6c6] pl-[10px] text-[#999]"><T w={79}>Batch Export</T></div>
            </div>
            <div className="mt-[5px] flex h-[34px] shrink-0 border border-[#c2c2c2] bg-[#fafafa]">
              <div className="flex w-[121px] items-center justify-center"><T w={63}>Document</T></div>
              <div className="flex w-[89px] items-center justify-center border-l-2 border-[#c2c2c2]"><T w={31}>Page</T></div>
              <div className="-my-px flex w-[115px] items-center justify-center border border-[#b0b0b0] bg-[#d8d8d8]"><T w={54}>Selection</T></div>
              <div className="flex flex-1 items-center justify-center"><T w={46}>Custom</T></div>
            </div>
            <div className="ml-[10px] mt-[12px]"><T w={67} c="font-bold">Image Size</T></div>
            <div className="ml-[10px] mt-[16px] flex h-[34px] items-center">
              <div className="flex w-[46px] flex-col items-start gap-[3px]"><T w={35}>Width</T><T w={23}>(px)</T></div>
              <Spin c="w-[152px]" b="w-[20px] pr-[2px]" v="4724" w={32} />
              <div className="ml-[10px] flex w-[50px] flex-col items-start gap-[3px]"><T w={40}>Height</T><T w={23}>(px)</T></div>
              <Spin c="w-[153px]" b="w-[20px] pr-[2px]" v="3543" w={32} />
            </div>
            <div className="ml-[10px] mt-[5px] flex h-[34px] items-center">
              <div className="w-[46px]"><T w={22}>DPI</T></div>
              <Spin c="w-[152px]" b="w-[20px] pr-[2px]" v="300,00" w={43} />
            </div>
            <div className="ml-[10px] mt-[10px] flex h-[99px] items-center">
              <div className="h-[99px] w-[130px] border border-[#222] bg-[#c83737] shadow-[inset_1px_1px_0_#f0d0d0]" />
              <div className="-mt-[2px] ml-[23px]">
                <Check t="Export Selected only" w={125} />
                <Check t="Hide Export Settings" w={123} />
              </div>
            </div>
            <div className="mt-auto flex h-[30px] shrink-0 gap-[10px]">
              <div className="flex w-[177px] items-center rounded-[3px] border border-[#c0c0c0] bg-white pl-[7px]">
                <div className="flex h-[14px] items-center border-l border-[#bbb]"><T w={138}>me/melati/rect234.png</T></div>
                <S w={17} h={16} c="ml-[5px]">
                  <path d="M.5 15.500V.5h6l2 2.500h8v12.500z" fill="#c9b5a3" stroke="#a08a78" />
                  <path d="M1 15V8h4l2-2h9v9z" fill="#dfd3c8" />
                </S>
              </div>
              <div className="flex flex-1 items-center rounded-[3px] border border-[#c0c0c0] bg-[#fafafa] pl-[10px]">
                <T w={200}>Portable Network Graphic (*.png)</T>
                <S w={10} h={6} c="ml-[11px]"><path d="M0 0h10L5 5.500z" fill="#222" /></S>
              </div>
            </div>
            <div className="mt-[5px] flex h-[34px] shrink-0 items-center justify-center rounded-[3px] border border-[#c0c0c0] bg-[#fafafa]"><T w={41}>Export</T></div>
            <div className="mb-[1px] mt-[5px] h-[8px] shrink-0 rounded-[3px] border border-[#c0c0c0] bg-white" />
          </div>
        </div>
      </div>

      {/* palette */}
      <div className="flex h-[25px] shrink-0 items-end gap-px pl-px">
        <S c="bg-white"><path d="M0 0l16 16M16 0L0 16" stroke="#7a1414" strokeWidth="1.200" /></S>
        {palette.map((c, i) => <div key={i} className="h-[16px] w-[16px] shrink-0" style={{ backgroundColor: "#" + c }} />)}
        <S w={12} h={8} c="mb-[7px] ml-[12px]"><path d="M1 7l5-5 5 5" stroke="#222" strokeWidth="2" /></S>
        <S w={12} h={8} c="mb-[8px] ml-[18px]"><path d="M1 1l5 5 5-5" stroke="#222" strokeWidth="2" /></S>
        <div className="ml-[9px] flex h-[25px] w-[24px] items-center justify-center rounded-[3px] border border-[#c4c4c4] bg-[#fafafa]">
          <S w={10}><path d="M0 1h10M0 5h10M0 9h10" stroke="#111" strokeWidth="1.700" /></S>
        </div>
      </div>

      {/* status bar */}
      <div className="flex h-[37px] shrink-0 items-center border-b border-[#bdbdbd] pt-[2px]">
        <div className="flex w-[44px] flex-col items-end gap-[4px]"><T w={23}>Fill:</T><T w={42}>Stroke:</T></div>
        <div className="ml-[16px] flex w-[50px] flex-col items-center gap-[3px]">
          <div className="h-[16px] w-[50px] rounded-[2px] bg-[#c83737]" />
          <T w={37} c="font-bold">Unset</T>
        </div>
        <T w={27} c="ml-[10px] mt-[17px]">0,00</T>
        <T w={13} c="ml-[7px]">O:</T>
        <Spin c="ml-[2px] w-[78px]" b="w-[20px]" v="100" w={24} dp />
        <div className="ml-[13px] h-[16px] w-[3px] bg-[#729fcf]" />
        <T w={43} c="ml-[6px]">Layer 1</T>
        <S c="ml-[19px]">
          <path d="M1.500 8.500C4 4.500 12 4.500 14.500 8.500 12 14.500 4 14.500 1.500 8.500z" stroke={K} strokeWidth="1.500" />
          <circle cx="8" cy="9" r="2.600" fill={K} />
          <path d="M8 6V1.500M4.500 6 3 2.500M11.500 6 13 2.500" stroke={K} strokeWidth="1.400" />
        </S>
        <S c="ml-[24px]">
          <path d="M1 8h10v7H1z" fill={K} />
          <path d="M8.500 8V4a2.600 2.600 0 0 1 5.200 0v3" stroke={K} strokeWidth="1.600" />
        </S>
        <div className="ml-[11px] h-[30px] w-px bg-[#d8d8d8]" />
        <T w={509} c="ml-[7px]">
          <b>Drag</b> to create a rectangle. <b>Drag controls</b> to round corners and resize. <b>Click</b> to select.
        </T>
        <div className="ml-auto h-[32px] w-px shrink-0 bg-[#d8d8d8]" />
        <div className="ml-[10px] flex w-[68px] flex-col gap-[3px]">
          <div className="flex justify-between"><T w={12}>X:</T><T w={47}>-434,84</T></div>
          <div className="flex justify-between"><T w={12}>Y:</T><T w={47}>-314,40</T></div>
        </div>
        <T w={12} c="ml-[10px]">Z:</T>
        <Spin c="ml-[1px] w-[103px]" b="w-[25px]" v="20%" w={27} p="pl-[8px]" />
        <T w={12} c="ml-[12px]">R:</T>
        <Spin c="ml-[1px] mr-[15px] w-[111px]" b="w-[25px]" v="0,00°" w={33} p="pl-[10px]" />
      </div>

      {/* tooltip */}
      <div className="absolute left-[9px] top-[327px] flex h-[36px] w-[194px] items-center rounded-[2px] border border-[#e2d59a] bg-[#fce9a0] pl-[9px] text-[#4c4c4c] shadow-[1px_2px_5px_rgba(0,0,0,0.3)]">
        <T w={174}>Create stars and polygons (*)</T>
      </div>

      {/* annotations */}
      <svg width="1366" height="768" className="pointer-events-none absolute left-0 top-0" fill="none" stroke="#ff0000" strokeWidth="4">
        <ellipse cx="126.300" cy="149.500" rx="85" ry="36" />
        <ellipse cx="303.800" cy="145.800" rx="76" ry="45" />
        <ellipse cx="1056" cy="371.300" rx="126" ry="28.300" />
      </svg>
    </div>
  );
}
